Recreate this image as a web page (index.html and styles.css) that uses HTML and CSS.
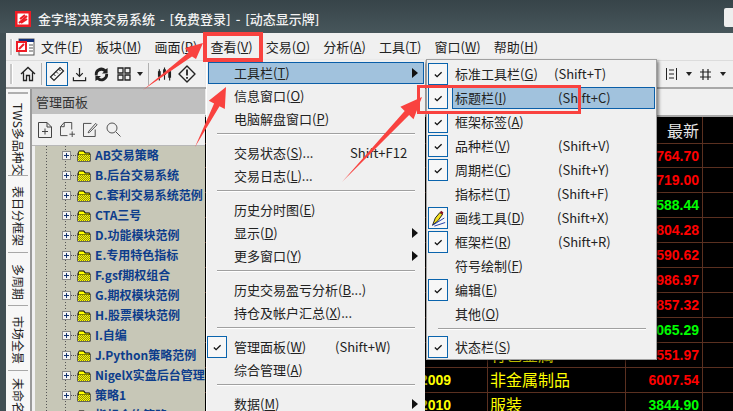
FILE: index.html
```html
<!DOCTYPE html>
<html lang="zh-CN">
<head>
<meta charset="utf-8">
<title>金字塔决策交易系统</title>
<link rel="stylesheet" href="styles.css">
</head>
<body>
<svg class="defs" aria-hidden="true">
  <defs>
    <pattern id="dither" width="2" height="2" patternUnits="userSpaceOnUse">
      <rect width="2" height="2" fill="#ffff00"/>
      <rect width="1" height="1" fill="#8c8c10"/>
      <rect x="1" y="1" width="1" height="1" fill="#8c8c10"/>
    </pattern>
    <symbol id="folder" viewBox="0 0 16 13">
      <path d="M1.5 12.5V4.5L3 1.5H8L9.5 3.5H13.5L14.5 5V12.5Z" fill="#000"/>
      <path d="M3 2.5H7.5L9 4.5H13.5V5.5H2.5Z" fill="#ffff00"/>
      <rect x="2" y="6" width="12" height="6" fill="url(#dither)"/>
    </symbol>
    <symbol id="plusbox" viewBox="0 0 9 9">
      <rect x=".5" y=".5" width="8" height="8" fill="#f2f2f2" stroke="#8a8a8a"/>
      <path d="M2 4.5H7M4.5 2V7" stroke="#12326e" fill="none"/>
    </symbol>
    <symbol id="tick" viewBox="0 0 20 22">
      <path d="M6.5 11.5L9 14L14 9" fill="none" stroke="#111" stroke-width="1.4"/>
    </symbol>
  </defs>
</svg>

<header class="titlebar">
  <svg class="app-icon" viewBox="0 0 16 16"><rect width="16" height="16" fill="#ee1c25"/><rect x="2.5" y="2.5" width="11" height="11" fill="#fff"/><path d="M4 12L12 5M5 8L10 4M6 12L12 8" stroke="#ee1c25" stroke-width="2" fill="none"/></svg>
  <span class="title-text">金字塔决策交易系统 - [免费登录] - [动态显示牌]</span>
  <span class="win-btn"></span>
</header>

<div class="client">
  <nav class="menubar">
    <span class="grip"></span>
    <svg class="doc-icon" viewBox="0 0 19 18"><rect x="3" y="1" width="15" height="16" fill="#fff" stroke="#555"/><rect x="3" y="1" width="15" height="3" fill="#12307a"/><path d="M13 7h4M13 10h4M13 13h4" stroke="#555"/><rect x="0" y="3" width="11" height="11" fill="#ee1c25"/><rect x="2" y="5" width="7" height="7" fill="#fff"/><path d="M3 11L8 6" stroke="#ee1c25" stroke-width="2"/></svg>
    <div class="menu-items">
      <span>文件(<u>F</u>)</span>
      <span>板块(<u>M</u>)</span>
      <span>画面(<u>P</u>)</span>
      <span>查看(<u>V</u>)</span>
      <span>交易(<u>O</u>)</span>
      <span>分析(<u>A</u>)</span>
      <span>工具(<u>T</u>)</span>
      <span>窗口(<u>W</u>)</span>
      <span>帮助(<u>H</u>)</span>
    </div>
  </nav>

  <div class="toolbar">
    <span class="grip tall"></span>
    <svg class="tool home" viewBox="0 0 16 16"><path d="M1 8L8 1.500L15 8M3.500 6.500V14.500H6.500V9.500H9.500V14.500H12.500V6.500" fill="none" stroke="#222" stroke-width="1.3"/></svg>
    <span class="tb-sep"></span>
    <span class="tool-active"><svg viewBox="0 0 16 16"><path d="M1.500 11L11 1.500L14.500 5L5 14.500Z" fill="none" stroke="#222" stroke-width="1.2"/><path d="M4.500 8L6.500 10M7 5.500L9 7.500M9.500 3L11.500 5" stroke="#222"/></svg></span>
    <svg class="tool dl" viewBox="0 0 16 16"><path d="M8 1V10M4.500 6.500L8 10L11.500 6.500M1.500 11V14.500H14.500V11" fill="none" stroke="#222" stroke-width="1.3"/></svg>
    <svg class="tool swirl" viewBox="0 0 16 16"><path d="M1 9A7 7 0 0 1 12.500 2.500L14.500 1V7H8.500L10.500 5A4 4 0 0 0 4 9Z" fill="#222"/><path d="M15 7.500A7 7 0 0 1 3.500 13.500L1.500 15V9.500H7.500L5.500 11.200A4 4 0 0 0 12 7.500Z" fill="#222"/></svg>
    <svg class="tool grid4" viewBox="0 0 14 14"><path d="M1 1h5v5H1zM8 1h5v5H8zM1 8h5v5H1zM8 8h5v5H8z" fill="none" stroke="#222" stroke-width="1.3"/></svg>
    <span class="caret"></span>
    <span class="tb-sep"></span>
    <svg class="tool bars" viewBox="0 0 16 16"><path d="M2.500 3V15M8 1V14M13.500 2V15" stroke="#222" stroke-width="1.2"/><rect x="1" y="5" width="3" height="6" fill="#222"/><rect x="6.500" y="3" width="3" height="6" fill="#222"/><rect x="12" y="5" width="3" height="7" fill="#222"/></svg>
    <svg class="tool warn" viewBox="0 0 18 18"><path d="M9 1L17 9L9 17L1 9Z" fill="none" stroke="#222" stroke-width="1.4" stroke-linejoin="round"/><path d="M9 4.500V10.500M9 12V13.800" stroke="#222" stroke-width="1.8"/></svg>
    <div class="toolbar-right">
      <svg class="tool list" viewBox="0 0 11 12"><path d="M.5 0V12M10.500 0V12M3 2H8M3 6H8M3 10H8" stroke="#222" fill="none"/></svg>
      <span class="caret"></span>
      <svg class="tool hash" viewBox="0 0 11 11"><path d="M0 3H11M0 8H11M3 0V11M8 0V11" stroke="#222" stroke-width="1.2" fill="none"/></svg>
      <span class="caret"></span>
    </div>
  </div>

  <main class="workspace">
    <aside class="tabs">
      <span class="tabs-grip"></span>
      <div class="tab t1"><span>TWS多品种交</span></div>
      <div class="tab t2"><span>表日分框架</span></div>
      <div class="tab t3"><span>多周期</span></div>
      <div class="tab t4"><span>市场全景</span></div>
      <div class="tab t5"><span>未命名</span></div>
    </aside>

    <section class="panel">
      <div class="panel-head">管理面板</div>
      <div class="panel-tools">
        <svg viewBox="0 0 14 16"><path d="M.5 .5H9L13.500 5V15.500H.5ZM9 .5V5H13.500M4 9.500H10M7 6.500V12.500" fill="none" stroke="#444"/></svg>
        <svg class="w16" viewBox="0 0 16 16"><path d="M8 14.500H.5V5L4.500 .5H12.500V8M4.500 .5V5H.5M10 13H16M13 10V16" fill="none" stroke="#444"/></svg>
        <svg class="w16" viewBox="0 0 16 16"><path d="M13 8V15.500H.5V1.500H9M6 10L5.500 11.500L7 11L15 3L13.500 1.500Z" fill="none" stroke="#444"/></svg>
        <svg class="w16" viewBox="0 0 15 15"><circle cx="6" cy="6" r="5" fill="none" stroke="#555"/><path d="M10 10L14.500 14.500" stroke="#555"/></svg>
      </div>
      <div class="tree">
        <ul class="tree-list">
          <li><svg class="pb"><use href="#plusbox"/></svg><i class="dots"></i><svg class="fd"><use href="#folder"/></svg><span>AB交易策略</span></li>
          <li><svg class="pb"><use href="#plusbox"/></svg><i class="dots"></i><svg class="fd"><use href="#folder"/></svg><span>B.后台交易系统</span></li>
          <li><svg class="pb"><use href="#plusbox"/></svg><i class="dots"></i><svg class="fd"><use href="#folder"/></svg><span>C.套利交易系统范例</span></li>
          <li><svg class="pb"><use href="#plusbox"/></svg><i class="dots"></i><svg class="fd"><use href="#folder"/></svg><span>CTA三号</span></li>
          <li><svg class="pb"><use href="#plusbox"/></svg><i class="dots"></i><svg class="fd"><use href="#folder"/></svg><span>D.功能模块范例</span></li>
          <li><svg class="pb"><use href="#plusbox"/></svg><i class="dots"></i><svg class="fd"><use href="#folder"/></svg><span>E.专用特色指标</span></li>
          <li><svg class="pb"><use href="#plusbox"/></svg><i class="dots"></i><svg class="fd"><use href="#folder"/></svg><span>F.gsf期权组合</span></li>
          <li><svg class="pb"><use href="#plusbox"/></svg><i class="dots"></i><svg class="fd"><use href="#folder"/></svg><span>G.期权模块范例</span></li>
          <li><svg class="pb"><use href="#plusbox"/></svg><i class="dots"></i><svg class="fd"><use href="#folder"/></svg><span>H.股票模块范例</span></li>
          <li><svg class="pb"><use href="#plusbox"/></svg><i class="dots"></i><svg class="fd"><use href="#folder"/></svg><span>I.自编</span></li>
          <li><svg class="pb"><use href="#plusbox"/></svg><i class="dots"></i><svg class="fd"><use href="#folder"/></svg><span>J.Python策略范例</span></li>
          <li><svg class="pb"><use href="#plusbox"/></svg><i class="dots"></i><svg class="fd"><use href="#folder"/></svg><span>NigelX实盘后台管理</span></li>
          <li><svg class="pb"><use href="#plusbox"/></svg><i class="dots"></i><svg class="fd"><use href="#folder"/></svg><span>策略1</span></li>
          <li><svg class="pb"><use href="#plusbox"/></svg><i class="dots"></i><svg class="fd"><use href="#folder"/></svg><span>指标合约策略</span></li>
        </ul>
      </div>
    </section>

    <section class="board">
      <div class="board-strip"></div>
      <div class="board-table">
        <div class="row head"><div class="c code"></div><div class="c name"></div><div class="c val">最新</div><div class="c end"></div></div>
        <div class="row first"><div class="c code"></div><div class="c name"></div><div class="c val up">3764.70</div><div class="c end"></div></div>
        <div class="row"><div class="c code"></div><div class="c name"></div><div class="c val up">4719.00</div><div class="c end"></div></div>
        <div class="row"><div class="c code"></div><div class="c name"></div><div class="c val down">1588.44</div><div class="c end"></div></div>
        <div class="row"><div class="c code"></div><div class="c name"></div><div class="c val up">2804.28</div><div class="c end"></div></div>
        <div class="row"><div class="c code"></div><div class="c name"></div><div class="c val up">3590.62</div><div class="c end"></div></div>
        <div class="row"><div class="c code"></div><div class="c name"></div><div class="c val up">4986.97</div><div class="c end"></div></div>
        <div class="row"><div class="c code"></div><div class="c name"></div><div class="c val up">3857.32</div><div class="c end"></div></div>
        <div class="row"><div class="c code"></div><div class="c name"></div><div class="c val down">2065.29</div><div class="c end"></div></div>
        <div class="row"><div class="c code"></div><div class="c name">有色金属</div><div class="c val up">3551.97</div><div class="c end"></div></div>
        <div class="row"><div class="c code">2009</div><div class="c name">非金属制品</div><div class="c val up">6007.54</div><div class="c end"></div></div>
        <div class="row"><div class="c code">2010</div><div class="c name">服装</div><div class="c val down">3844.90</div><div class="c end"></div></div>
      </div>
    </section>
  </main>
</div>

<div class="menu menu-view">
  <div class="mi active"><span class="mark"></span><span class="lb">工具栏(<u>T</u>)</span><span class="sub"></span></div>
  <div class="mi"><span class="mark"></span><span class="lb">信息窗口(<u>O</u>)</span></div>
  <div class="mi"><span class="mark"></span><span class="lb">电脑解盘窗口(<u>P</u>)</span></div>
  <div class="ms"></div>
  <div class="mi"><span class="mark"></span><span class="lb">交易状态(<u>S</u>)...</span><span class="sc">Shift+F12</span></div>
  <div class="mi"><span class="mark"></span><span class="lb">交易日志(<u>L</u>)...</span></div>
  <div class="ms"></div>
  <div class="mi"><span class="mark"></span><span class="lb">历史分时图(<u>E</u>)</span></div>
  <div class="mi"><span class="mark"></span><span class="lb">显示(<u>D</u>)</span><span class="sub"></span></div>
  <div class="mi"><span class="mark"></span><span class="lb">更多窗口(<u>Y</u>)</span><span class="sub"></span></div>
  <div class="ms"></div>
  <div class="mi"><span class="mark"></span><span class="lb">历史交易盈亏分析(<u>B</u>...)</span></div>
  <div class="mi"><span class="mark"></span><span class="lb">持仓及帐户汇总(<u>X</u>)...</span></div>
  <div class="ms"></div>
  <div class="mi"><span class="mark on"><svg><use href="#tick"/></svg></span><span class="lb">管理面板(<u>W</u>)</span><span class="sc sc-w">(Shift+W)</span></div>
  <div class="mi"><span class="mark"></span><span class="lb">综合管理(<u>A</u>)</span></div>
  <div class="ms"></div>
  <div class="mi"><span class="mark"></span><span class="lb">数据(<u>M</u>)</span><span class="sub"></span></div>
</div>

<div class="menu menu-bars">
  <div class="bi"><span class="mark on"><svg><use href="#tick"/></svg></span><div class="bb"><span class="lb">标准工具栏(<u>G</u>)</span><span class="sc s-t">(Shift+T)</span></div></div>
  <div class="bi"><span class="mark on"><svg><use href="#tick"/></svg></span><div class="bb active"><span class="lb">标题栏(<u>I</u>)</span><span class="sc">(Shift+C)</span></div></div>
  <div class="bi"><span class="mark on"><svg><use href="#tick"/></svg></span><div class="bb"><span class="lb">框架标签(<u>A</u>)</span></div></div>
  <div class="bi"><span class="mark on"><svg><use href="#tick"/></svg></span><div class="bb"><span class="lb">品种栏(<u>V</u>)</span><span class="sc">(Shift+V)</span></div></div>
  <div class="bi"><span class="mark on"><svg><use href="#tick"/></svg></span><div class="bb"><span class="lb">周期栏(<u>C</u>)</span><span class="sc">(Shift+Y)</span></div></div>
  <div class="bi"><span class="mark"></span><div class="bb"><span class="lb">指标栏(<u>T</u>)</span><span class="sc s-f">(Shift+F)</span></div></div>
  <div class="bi"><span class="mark on"><svg viewBox="0 0 20 22"><path d="M4 19L7 11L12 5L15 7L10 14Z" fill="#f5e020" stroke="#111"/><path d="M12 5L13.500 3L16 5L15 7Z" fill="#8a1020"/><path d="M4 19L17 11M6 20L18 16" stroke="#1030a0" fill="none"/></svg></span><div class="bb"><span class="lb">画线工具(<u>D</u>)</span><span class="sc s-f">(Shift+X)</span></div></div>
  <div class="bi"><span class="mark on"><svg><use href="#tick"/></svg></span><div class="bb"><span class="lb">框架栏(<u>R</u>)</span><span class="sc">(Shift+R)</span></div></div>
  <div class="bi"><span class="mark"></span><div class="bb"><span class="lb">符号绘制(<u>F</u>)</span></div></div>
  <div class="bi"><span class="mark on"><svg><use href="#tick"/></svg></span><div class="bb"><span class="lb">编辑(<u>E</u>)</span></div></div>
  <div class="bi"><span class="mark"></span><div class="bb"><span class="lb">其他(<u>O</u>)</span></div></div>
  <div class="ms"></div>
  <div class="bi"><span class="mark on"><svg><use href="#tick"/></svg></span><div class="bb"><span class="lb">状态栏(<u>S</u>)</span></div></div>
</div>

<svg class="annot" viewBox="0 0 733 411" aria-hidden="true">
  <polygon points="143,90 188.500,52.500 185,48 203,43 196,59 192,56.500"/>
  <polygon points="195,147 214.100,103.400 208.800,100.700 226,87 224.800,108.900 219.500,106.200"/>
  <polygon points="342,182 404.700,110.900 400.400,106.800 422,97 413.500,119.200 409.100,115.100"/>
  <rect class="box" x="205" y="34" width="56" height="26"/>
  <rect class="box thin" x="418.500" y="86.500" width="161" height="26"/>
</svg>
</body>
</html>
```

FILE: styles.css
```css
* { box-sizing: border-box; }
html, body { margin: 0; height: 100%; }
body {
  width: 733px;
  height: 411px;
  overflow: hidden;
  position: relative;
  background: #414f54;
  color: #222;
  font: 13px/1.2 "Noto Sans CJK SC", "Noto Sans", sans-serif;
}
u { text-decoration: underline; text-underline-offset: 1px; }
.defs { position: absolute; width: 0; height: 0; }

/* title bar */
.titlebar {
  height: 33px;
  padding-top: 4px;
  display: flex;
  align-items: center;
  background: linear-gradient(#374449, #47565b);
}
.app-icon { width: 16px; height: 16px; margin-left: 15px; }
.title-text { margin-left: 7px; color: #f2f2f2; font-size: 13px; font-weight: 500; white-space: nowrap; word-spacing: 2px; }
.win-btn { margin-left: auto; align-self: flex-start; margin-top: 4px; width: 9px; height: 19px; background: #eee; border-radius: 2px 0 0 2px; }

/* client */
.client { margin-left: 6px; height: 378px; background: #f0f0f0; display: flex; flex-direction: column; }
.menubar { flex: none; height: 28px; display: flex; align-items: center; padding-left: 4px; border-bottom: 1px solid #dcdcdc; }
.grip { width: 2px; height: 16px; background: #c8c8c8; box-shadow: 1px 0 0 #fff; }
.grip.tall { height: 20px; margin-left: 4px; }
.doc-icon { width: 19px; height: 18px; margin-left: 4px; }
.menu-items { display: flex; gap: 13px; margin-left: 6px; white-space: nowrap; }

.toolbar { flex: none; height: 28px; display: flex; align-items: center; border-bottom: 2px solid #a8a8a8; }
.tool { flex: none; }
.home { width: 16px; height: 16px; margin-left: 8px; }
.tb-sep { width: 1px; height: 22px; background: #b0b0b0; margin: 0 4px 0 5px; flex: none; }
.tool-active { width: 22px; height: 24px; border: 1px solid #0a64ad; background: #f6f6f6; display: flex; align-items: center; justify-content: center; flex: none; }
.tool-active svg { width: 16px; height: 16px; }
.dl { width: 15px; height: 15px; margin-left: 4px; }
.swirl { width: 15px; height: 15px; margin-left: 7px; }
.grid4 { width: 14px; height: 14px; margin-left: 8px; }
.caret { width: 0; height: 0; border: 3px solid transparent; border-top: 4px solid #222; border-bottom: 0; margin-left: 6px; flex: none; }
.bars { width: 15px; height: 16px; margin-left: 4px; }
.warn { width: 18px; height: 18px; margin-left: 6px; }
.toolbar-right { margin-left: auto; display: flex; align-items: center; padding-right: 7px; }
.list { width: 11px; height: 12px; }
.hash { width: 11px; height: 11px; margin-left: 8px; }
.toolbar-right .caret { margin-left: 9px; }

/* workspace */
.workspace { flex: 1; min-height: 0; display: grid; grid-template-columns: 26px 173px 528px; grid-template-rows: minmax(0, 1fr); }
.tabs { display: flex; flex-direction: column; background: #f7f7f7; border-right: 2px solid #9a9a9a; padding-left: 2px; overflow: hidden; }
.tabs-grip { height: 2px; margin: 3px 2px 0 0; background: #b0b0b0; flex: none; }
.tab { flex: none; border-bottom: 1px solid #a8a8a8; margin-right: 2px; display: flex; justify-content: center; font-size: 12px; color: #222; }
.tab span { writing-mode: vertical-rl; text-orientation: sideways; white-space: nowrap; line-height: 1; }
.t1 { height: 82px; padding-top: 9px; overflow: hidden; }
.t2 { height: 77px; padding-top: 10px; }
.t3 { height: 53px; padding-top: 11px; }
.t4 { height: 65px; padding-top: 10px; }
.t5 { flex: 1; padding-top: 7px; border-bottom: 0; }

.panel { display: flex; flex-direction: column; min-height: 0; overflow: hidden; }
.panel-head { flex: none; height: 25px; background: #c0c0c0; padding-left: 4px; line-height: 25px; color: #333; font-size: 13px; }
.panel-tools { flex: none; height: 32px; display: flex; align-items: center; gap: 8px; padding-left: 6px; border-bottom: 1px solid #b8b8b8; }
.panel-tools svg { width: 14px; height: 16px; flex: none; }
.panel-tools .w16 { width: 15px; height: 15px; }
.tree {
  flex: 1;
  min-height: 0;
  margin-left: 3px;
  overflow: hidden;
  background:
    repeating-linear-gradient(to bottom, #555 0 1px, transparent 1px 3px) 11px 0 / 1px 100% no-repeat,
    repeating-linear-gradient(to bottom, #555 0 1px, transparent 1px 3px) 30px 0 / 1px 100% no-repeat,
    #c7c7b7;
}
.tree-list { list-style: none; margin: -1px 0 0; padding: 0 0 0 27px; }
.tree-list li { height: 20px; display: flex; align-items: center; white-space: nowrap; font-size: 12px; font-weight: 700; color: #0d3d8c; }
.pb { width: 9px; height: 9px; flex: none; }
.dots { width: 6px; height: 1px; flex: none; background: repeating-linear-gradient(to right, #555 0 1px, transparent 1px 2px); }
.fd { width: 16px; height: 13px; flex: none; margin-left: -1px; }
.tree-list li span { margin-left: 3px; }

/* board */
.board { display: flex; flex-direction: column; min-height: 0; overflow: hidden; }
.board-strip { flex: none; height: 28px; border-bottom: 2px solid #a8a8a8; }
.board-table { flex: 1; min-height: 0; overflow: hidden; background: #000; }
.row { display: grid; grid-template-columns: 283px 138px 77px 30px; height: 25px; border-bottom: 1px solid #5a3020; }
.row.head { height: 27px; }
.row.first { height: 24px; }
.c { border-right: 1px solid #5a3020; display: flex; align-items: center; }
.c.end { border-right: 0; }
.code { justify-content: flex-end; padding-right: 36px; color: #ffff00; font: 700 14px "Liberation Sans", sans-serif; }
.name { padding-left: 2px; color: #ffff00; font-size: 16px; white-space: nowrap; }
.val { justify-content: flex-end; padding-right: 3px; font: 700 14px "Liberation Sans", sans-serif; }
.head .val { font: 16px "Noto Sans CJK SC", sans-serif; color: #e6e6e6; }
.up { color: #ff0000; }
.down { color: #00ff00; }

/* menus */
.menu { position: absolute; background: #f0f0f0; box-shadow: 2px 2px 3px rgba(0, 0, 0, .45); }
.menu-view { left: 206px; top: 60px; width: 219px; height: 360px; padding: 1px 0 0; border-left: 1px solid #fff; }
.menu-bars { left: 426px; top: 59px; width: 231px; height: 301px; padding: 3px 0 0 1px; border: 1px solid #a0a0a0; }
.mi { height: 22px; margin: 1px; display: flex; align-items: center; border: 1px solid transparent; white-space: nowrap; }
.mi.active { background: #a1c2dd; border-color: #0a5ea8; }
.mark { flex: none; width: 20px; height: 22px; margin-left: -2px; margin-right: 7px; display: block; }
.mark.on { border: 1px solid #0a64ad; background: #f7f7f7; }
.mark svg { display: block; width: 18px; height: 20px; }
.lb { width: 116px; flex: none; color: #222; }
.sc { flex: none; }
.sc-w { margin-left: -15px; }
.sub { margin-left: auto; margin-right: 5px; width: 0; height: 0; border: 5px solid transparent; border-left: 6px solid #111; border-right: 0; }
.ms { height: 8px; margin: 0 10px; }
.ms::before { content: ""; display: block; margin-top: 3px; height: 1px; background: #a0a0a0; box-shadow: 0 1px 0 #fff; }
.bi { height: 22px; margin-bottom: 2px; display: flex; }
.bi .mark { margin: 0; width: 20px; }
.bb { flex: 1; margin: 0 1px 0 4px; padding-left: 2px; display: flex; align-items: center; border: 1px solid transparent; white-space: nowrap; }
.bb.active { background: #a1c2dd; border-color: #0a5ea8; }
.bb .lb { width: 103px; }
.s-t { margin-left: -4px; }
.s-f { margin-left: -1px; }

/* annotations */
.annot { position: absolute; left: 0; top: 0; width: 733px; height: 411px; pointer-events: none; }
.annot polygon { fill: #f9423f; }
.annot .box { fill: none; stroke: #f9423f; stroke-width: 4; }
.annot .box.thin { stroke-width: 3; }
```
